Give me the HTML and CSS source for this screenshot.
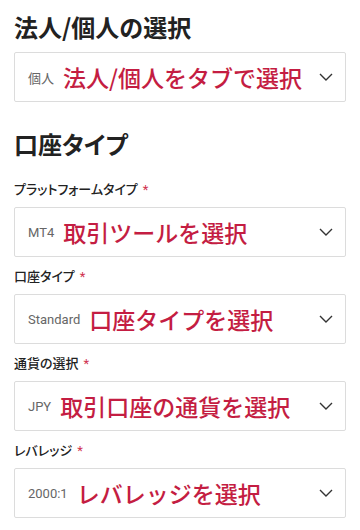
FILE: index.html
```html
<!DOCTYPE html>
<html lang="ja">
<head>
<meta charset="utf-8">
<link rel="stylesheet" href="styles.css">
</head>
<body>
<main class="page">
  <h2 class="heading">法人/個人の選択</h2>
  <div class="select select--first">
    <span class="value value--cjk">個人</span>
    <span class="note">法人/個人をタブで選択</span>
    <svg class="chev" viewBox="0 0 14 8" width="14" height="8"><path d="M1 1 L7 7 L13 1" fill="none" stroke="#333" stroke-width="1.4"/></svg>
  </div>

  <h2 class="heading heading--second">口座タイプ</h2>

  <div class="field">
    <div class="label">プラットフォームタイプ<span class="req">*</span></div>
    <div class="select">
      <span class="value">MT4</span>
      <span class="note">取引ツールを選択</span>
      <svg class="chev" viewBox="0 0 14 8" width="14" height="8"><path d="M1 1 L7 7 L13 1" fill="none" stroke="#333" stroke-width="1.4"/></svg>
    </div>
  </div>

  <div class="field">
    <div class="label">口座タイプ<span class="req">*</span></div>
    <div class="select">
      <span class="value">Standard</span>
      <span class="note">口座タイプを選択</span>
      <svg class="chev" viewBox="0 0 14 8" width="14" height="8"><path d="M1 1 L7 7 L13 1" fill="none" stroke="#333" stroke-width="1.4"/></svg>
    </div>
  </div>

  <div class="field">
    <div class="label">通貨の選択<span class="req">*</span></div>
    <div class="select">
      <span class="value">JPY</span>
      <span class="note">取引口座の通貨を選択</span>
      <svg class="chev" viewBox="0 0 14 8" width="14" height="8"><path d="M1 1 L7 7 L13 1" fill="none" stroke="#333" stroke-width="1.4"/></svg>
    </div>
  </div>

  <div class="field">
    <div class="label">レバレッジ<span class="req">*</span></div>
    <div class="select">
      <span class="value">2000:1</span>
      <span class="note">レバレッジを選択</span>
      <svg class="chev" viewBox="0 0 14 8" width="14" height="8"><path d="M1 1 L7 7 L13 1" fill="none" stroke="#333" stroke-width="1.4"/></svg>
    </div>
  </div>
</main>
</body>
</html>
```

FILE: styles.css
```css
html, body {
  margin: 0;
  padding: 0;
  background: #ffffff;
}

body {
  font-family: Roboto, "Noto Sans CJK JP", sans-serif;
  color: #333;
}

.page {
  padding: 11px 14px 0 14px;
}

.heading {
  margin: 0;
  font-family: "Noto Sans CJK JP", sans-serif;
  font-size: 24px;
  font-weight: 700;
  line-height: 32px;
  color: #222;
}

.heading--second {
  margin-top: 26px;
  margin-bottom: 19px;
  font-feature-settings: "palt";
}

.select {
  box-sizing: border-box;
  height: 50px;
  border: 1px solid #dcdcdc;
  border-radius: 2px;
  display: flex;
  align-items: center;
  padding: 0 12px 0 13px;
  background: #fff;
}

.select--first {
  margin-top: 9px;
}

.value {
  font-family: Roboto, "Noto Sans CJK JP", sans-serif;
  font-size: 13px;
  color: #666;
  margin-right: 9px;
}

.value--cjk {
  font-family: "Noto Sans CJK JP", sans-serif;
  font-size: 13px;
}

.note {
  font-family: "Noto Sans CJK JP", sans-serif;
  font-size: 23px;
  font-weight: 500;
  color: #c41d42;
  line-height: 1;
  flex: 1;
  white-space: nowrap;
}

.chev {
  flex: none;
  display: block;
}

.field {
  margin-bottom: 9px;
}

.label {
  font-family: "Noto Sans CJK JP", sans-serif;
  font-feature-settings: "palt";
  font-size: 13px;
  font-weight: 500;
  line-height: 20px;
  color: #222;
  margin-bottom: 7px;
}

.req {
  color: #d0324f;
  margin-left: 5px;
  font-family: Roboto, sans-serif;
  font-weight: 400;
}
```
